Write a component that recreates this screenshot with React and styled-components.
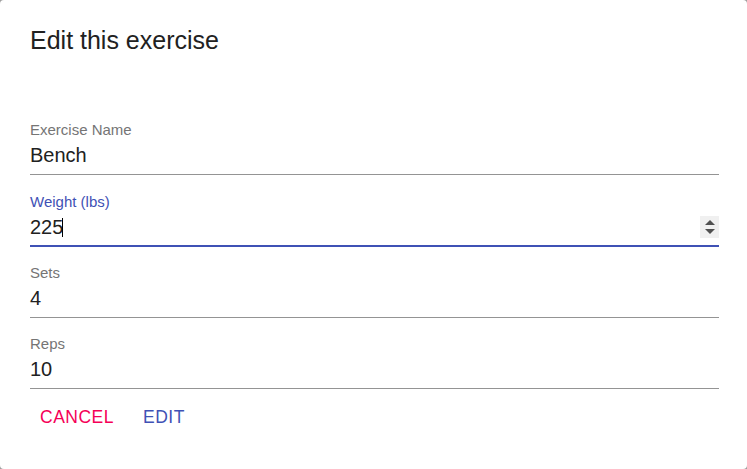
import React from "react";
import styled, { createGlobalStyle } from "styled-components";

const GlobalStyle = createGlobalStyle`
  html, body {
    margin: 0;
    padding: 0;
    background: #9e9e9e;
  }
  body {
    font-family: "Liberation Sans", Arial, sans-serif;
  }
`;

const SDialog = styled.div`
  width: 747px;
  height: 469px;
  box-sizing: border-box;
  background: #ffffff;
  border-radius: 4px;
  display: flex;
  flex-direction: column;
  overflow: hidden;
`;

const STitle = styled.h2`
  margin: 0;
  padding: 20px 30px;
  font-size: 25px;
  font-weight: 400;
  line-height: 40px;
  color: #212121;
`;

const SContent = styled.div`
  padding: 24px 28px 0 30px;
  display: flex;
  flex-direction: column;
`;

const SField = styled.div`
  padding-top: 18.25px;
  display: flex;
  flex-direction: column;
`;

const SLabel = styled.label`
  font-size: 15px;
  line-height: 15px;
  height: 15px;
  color: ${(p) => (p.$focused ? "#3f51b5" : "#757575")};
`;

const SInputRow = styled.div`
  margin-top: 7px;
  padding-bottom: 7px;
  display: flex;
  align-items: flex-start;
  border-bottom: 1px solid ${(p) => (p.$focused ? "#3f51b5" : "#949494")};
  box-shadow: ${(p) => (p.$focused ? "inset 0 -1px 0 #3f51b5" : "none")};
`;

const SValue = styled.span`
  font-size: 20px;
  line-height: 23px;
  height: 23px;
  color: #212121;
`;

const SCaret = styled.span`
  width: 1px;
  height: 19px;
  margin: 2px 0 0 -1px;
  background: #000000;
`;

const SSpinner = styled.div`
  margin-left: auto;
  width: 19px;
  height: 22px;
  background: #f0f0f0;
  display: flex;
  flex-direction: column;
  align-items: center;
  justify-content: center;
  gap: 4px;
`;

const SActions = styled.div`
  padding: 5px 0 0 30px;
  display: flex;
`;

const SButton = styled.button`
  min-width: 80px;
  padding: 7.5px 10px;
  border: none;
  background: transparent;
  font-family: "Liberation Sans", Arial, sans-serif;
  font-size: 17.5px;
  line-height: 1.75;
  letter-spacing: 0.5px;
  text-transform: uppercase;
  color: ${(p) => (p.$color === "secondary" ? "#f50057" : "#3f51b5")};
  cursor: pointer;
`;

function Spinner() {
  return (
    <SSpinner>
      <svg width="10" height="5" viewBox="0 0 10 5">
        <polygon points="5,0 10,5 0,5" fill="#505050" />
      </svg>
      <svg width="10" height="5" viewBox="0 0 10 5">
        <polygon points="0,0 10,0 5,5" fill="#505050" />
      </svg>
    </SSpinner>
  );
}

const fields = [
  { label: "Exercise Name", value: "Bench" },
  { label: "Weight (lbs)", value: "225", focused: true },
  { label: "Sets", value: "4" },
  { label: "Reps", value: "10" },
];

export default function App() {
  return (
    <>
      <GlobalStyle />
      <SDialog>
        <STitle>Edit this exercise</STitle>
        <SContent>
          {fields.map((f) => (
            <SField key={f.label}>
              <SLabel $focused={f.focused}>{f.label}</SLabel>
              <SInputRow $focused={f.focused}>
                <SValue>{f.value}</SValue>
                {f.focused && <SCaret />}
                {f.focused && <Spinner />}
              </SInputRow>
            </SField>
          ))}
        </SContent>
        <SActions>
          <SButton $color="secondary">Cancel</SButton>
          <SButton $color="primary">Edit</SButton>
        </SActions>
      </SDialog>
    </>
  );
}
